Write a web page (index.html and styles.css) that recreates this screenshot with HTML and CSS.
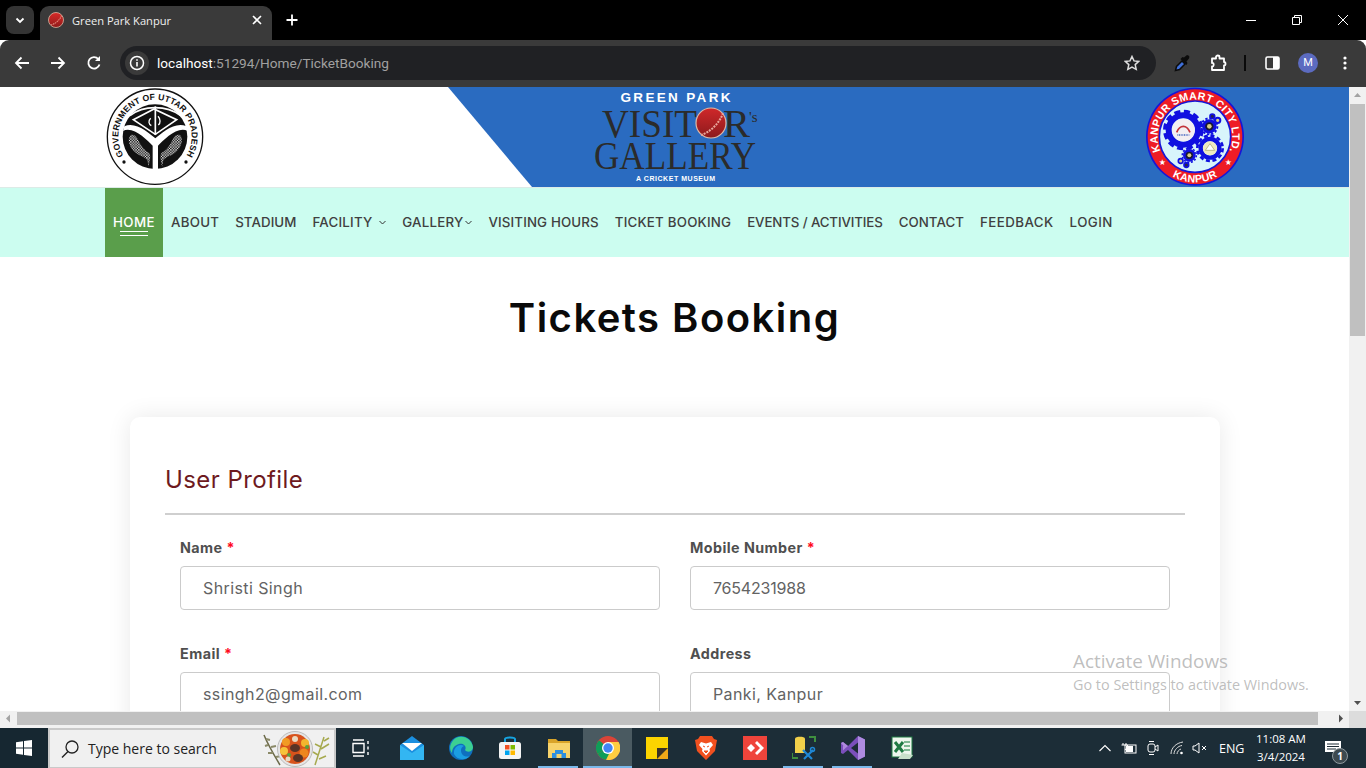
FILE: index.html
```html
<!DOCTYPE html>
<html lang="en">
<head>
<meta charset="utf-8">
<title>Green Park Kanpur</title>
<link rel="stylesheet" href="styles.css">
</head>
<body>
<div class="screen">
  <div class="tabstrip">
    <div class="tabdrop"><svg width="12" height="12" viewBox="0 0 12 12"><path d="M2.5 4.5 6 8l3.5-3.5" fill="none" stroke="#fff" stroke-width="1.8"/></svg></div>
    <div class="tab">
      <svg class="favicon" width="16" height="16" viewBox="0 0 16 16"><defs><linearGradient id="ballGrad" x1="0" y1="0" x2="0" y2="1"><stop offset="0" stop-color="#d92a28"/><stop offset="1" stop-color="#8f1a1a"/></linearGradient></defs><circle cx="8" cy="8" r="7.500" fill="url(#ballGrad)" stroke="#d9b9a5" stroke-width=".8"/><path d="M3 13C7 12 12 8 13.500 3.500" fill="none" stroke="#e28a7c" stroke-width="1.100" stroke-dasharray="1.500 .7"/></svg>
      <span class="tabtitle">Green Park Kanpur</span>
      <svg class="tabclose" width="10" height="10" viewBox="0 0 10 10"><path d="M1 1l8 8M9 1 1 9" stroke="#fff" stroke-width="1.6"/></svg>
    </div>
    <svg class="newtab" width="12" height="12" viewBox="0 0 12 12"><path d="M6 .5v11M.5 6h11" stroke="#fff" stroke-width="1.8"/></svg>
    <div class="winbtns">
      <svg width="46" height="40" viewBox="0 0 46 40"><path d="M18 20.5h10" stroke="#fff"/></svg>
      <svg width="46" height="40" viewBox="0 0 46 40"><path d="M18.5 17.5h7v7h-7zM20.5 17.5v-2h7v7h-2" fill="none" stroke="#fff"/></svg>
      <svg width="46" height="40" viewBox="0 0 46 40"><path d="M18 15l10 10M28 15 18 25" stroke="#fff"/></svg>
    </div>
  </div>
  <div class="toolbar">
    <svg class="navicon" width="16" height="16" viewBox="0 0 16 16"><path d="M15 8H2M7.500 2.500 2 8l5.500 5.500" fill="none" stroke="#fff" stroke-width="1.800"/></svg>
    <svg class="navicon" width="16" height="16" viewBox="0 0 16 16"><path d="M1 8h13M8.500 2.500 14 8l-5.500 5.500" fill="none" stroke="#fff" stroke-width="1.800"/></svg>
    <svg class="navicon" width="16" height="16" viewBox="0 0 16 16"><path d="M13.500 9.500A5.700 5.700 0 1 1 12.300 4" fill="none" stroke="#fff" stroke-width="1.800"/><path d="M14 1v5H9z" fill="#fff"/></svg>
    <div class="omnibox">
      <div class="siteinfo"><svg width="16" height="16" viewBox="0 0 16 16"><circle cx="8" cy="8" r="6.500" fill="none" stroke="#fff" stroke-width="1.500"/><path d="M8 7v4.500M8 4.300v1.500" stroke="#fff" stroke-width="1.600"/></svg></div>
      <span class="url"><span class="urlhost">localhost</span>:51294/Home/TicketBooking</span>
      <svg class="star" width="16" height="16" viewBox="0 0 16 16"><path d="M8 1.500l2 4.400 4.800.5-3.600 3.200 1 4.700L8 12l-4.200 2.300 1-4.700L1.200 6.400 6 5.900z" fill="none" stroke="#ddd" stroke-width="1.500"/></svg>
    </div>
    <div class="tools">
      <svg class="eyedrop" width="16" height="17" viewBox="0 0 16 17"><path d="M1.500 15.500l1-4 5.500-5.500 3 3-5.500 5.500z" fill="#3f6fd8" stroke="#0c0c0c" stroke-width="1.500"/><path d="M6.500 4l6 6 1-2-1-1.500 2.500-3C16 1 15 .5 13 0l-3 2.500L8.500 2z" fill="#0c0c0c"/></svg>
      <svg class="ext" width="18" height="18" viewBox="0 0 18 18"><path d="M2 4.500h4V3c0-2 3.500-2 3.500 0v1.500H14V8c2 0 2 3.500 0 3.500v4.500H2v-3.500c2 .5 2.500-4 0-3.500z" fill="none" stroke="#fff" stroke-width="1.800" stroke-linejoin="round"/></svg>
      <span class="toolsep"></span>
      <svg class="side" width="15" height="14" viewBox="0 0 15 14"><rect x="1" y="1" width="13" height="12" rx="1.500" fill="none" stroke="#fff" stroke-width="1.600"/><rect x="8" y="1" width="6" height="12" fill="#fff"/></svg>
      <span class="avatar">M</span>
      <svg class="dots" width="4" height="14" viewBox="0 0 4 14"><circle cx="2" cy="2" r="1.600" fill="#fff"/><circle cx="2" cy="7" r="1.600" fill="#fff"/><circle cx="2" cy="12" r="1.600" fill="#fff"/></svg>
    </div>
  </div>

  <div class="viewport">
    <div class="page-and-vbar">
      <div class="page">
        <header class="site-header">
          <div class="header-blue"></div>
          <div class="header-row">
            <svg class="emblem" width="100" height="100" viewBox="45 6 300 300">
              <defs><pattern id="fishDots" width="8" height="8" patternUnits="userSpaceOnUse"><rect width="8" height="8" fill="#111"/><circle cx="2.500" cy="2.500" r="2.300" fill="#fff"/><circle cx="6.500" cy="6.500" r="1.800" fill="#fff"/></pattern></defs>
              <circle cx="195" cy="155" r="143" fill="#fff" stroke="#111" stroke-width="4"/>
              <circle cx="195" cy="155" r="97" fill="#111"/>
              <path id="upArc" d="M100 210A110 110 0 1 1 290 210" fill="none"/>
              <text class="emblem-text"><textPath href="#upArc" startOffset="50%" text-anchor="middle">GOVERNMENT OF UTTAR PRADESH</textPath></text>
              <circle cx="102" cy="231" r="5" fill="#111"/><circle cx="288" cy="231" r="5" fill="#111"/>
              <path d="M99 138C130 122 170 165 188 182V252H204V182C222 165 262 122 293 138L289 124C255 108 215 145 196 160 177 145 137 108 103 124z" fill="#fff"/>
              <path d="M130 104 192 72 260 104 196 148z" fill="#111" stroke="#fff" stroke-width="5"/>
              <path d="M120 92C160 60 230 60 272 92" fill="none" stroke="#fff" stroke-width="5"/>
              <path d="M196 64V150" stroke="#fff" stroke-width="5"/>
              <path d="M182 100C174 108 176 118 184 122M204 94C212 102 212 114 205 120" fill="none" stroke="#fff" stroke-width="4"/>
              <path d="M122 150C110 162 118 190 138 204 150 214 160 212 172 226L176 246C178 226 184 218 178 204 160 196 150 176 142 160 136 150 130 148 122 150z" fill="url(#fishDots)"/>
              <path d="M270 150C282 162 274 190 254 204 242 214 232 212 220 226L216 246C214 226 208 218 214 204 232 196 242 176 250 160 256 150 262 148 270 150z" fill="url(#fishDots)"/>
            </svg>
            <svg class="gallery-logo" width="165" height="100" viewBox="0 0 165 100">
              <defs><linearGradient id="bigBall" x1="0" y1="0" x2="0" y2="1"><stop offset="0" stop-color="#d0282a"/><stop offset="1" stop-color="#8c1a1c"/></linearGradient></defs>
              <text class="lg-green" x="82.500" y="15" text-anchor="middle" textLength="110">GREEN PARK</text>
              <text class="lg-serif" x="9" y="50" textLength="95" lengthAdjust="spacingAndGlyphs">VISIT</text>
              <text class="lg-serif" x="130" y="50" textLength="27" lengthAdjust="spacingAndGlyphs">R</text>
              <text class="lg-s" x="156" y="35">'s</text>
              <circle cx="118" cy="36" r="15" fill="url(#bigBall)" stroke="#e0b9a4" stroke-width="1.200"/>
              <path d="M108 48C116 46 127 36 130 26" fill="none" stroke="#e8a69b" stroke-width="2" stroke-dasharray="2 1"/>
              <text class="lg-serif" x="1" y="82" textLength="162" lengthAdjust="spacingAndGlyphs">GALLERY</text>
              <text class="lg-small" x="82.500" y="94" text-anchor="middle" textLength="79">A CRICKET MUSEUM</text>
            </svg>
            <svg class="smart-logo" width="100" height="100" viewBox="45 6 300 300">
              <circle cx="195" cy="155" r="147" fill="#1616d8"/>
              <circle cx="195" cy="155" r="142" fill="#ee1c25"/>
              <circle cx="195" cy="155" r="107" fill="#d8f4fb" stroke="#1616d8" stroke-width="5"/>
              <path id="ksTop" d="M123 241A112 112 0 1 1 267 241" fill="none"/>
              <text class="ks-text"><textPath href="#ksTop" startOffset="50%" text-anchor="middle">KANPUR SMART CITY LTD.</textPath></text>
              <path id="ksBot" d="M117 268A138 138 0 0 0 273 268" fill="none"/>
              <text class="ks-text"><textPath href="#ksBot" startOffset="50%" text-anchor="middle">KANPUR</textPath></text>
              <text class="ks-star" x="97" y="240" text-anchor="middle">★</text><text class="ks-star" x="295" y="240" text-anchor="middle">★</text>
              <circle cx="160" cy="135" r="44" fill="none" stroke="#1010e0" stroke-width="18"/>
              <circle cx="160" cy="135" r="55" fill="none" stroke="#1010e0" stroke-width="12" stroke-dasharray="18 10.800"/>
              <circle cx="160" cy="135" r="34" fill="#f2eef2"/><path d="M140 142C150 118 170 118 180 142" fill="none" stroke="#c2323a" stroke-width="5"/><path d="M142 150h36" stroke="#4466c0" stroke-width="5" stroke-dasharray="3 2"/>
              <circle cx="240" cy="190" r="28" fill="none" stroke="#1010e0" stroke-width="13"/>
              <circle cx="240" cy="190" r="38" fill="none" stroke="#1010e0" stroke-width="8" stroke-dasharray="12 7.900"/>
              <circle cx="240" cy="190" r="21" fill="#efe9c0"/><path d="M226 196 240 176 254 196z" fill="#fff" stroke="#a5a060" stroke-width="2"/>
              <circle cx="238" cy="124" r="17" fill="#1a1a30" stroke="#1010e0" stroke-width="9"/><circle cx="238" cy="124" r="24" fill="none" stroke="#1010e0" stroke-width="6" stroke-dasharray="7 5.500"/><circle cx="238" cy="124" r="7" fill="#d9cf85"/>
              <circle cx="263" cy="106" r="8" fill="#d9cf85" stroke="#1010e0" stroke-width="6"/><circle cx="247" cy="94" r="7" fill="#28284a" stroke="#1010e0" stroke-width="5"/>
              <circle cx="178" cy="211" r="15" fill="#1a1a30" stroke="#1010e0" stroke-width="8"/><circle cx="178" cy="211" r="21" fill="none" stroke="#1010e0" stroke-width="5" stroke-dasharray="6 5"/><circle cx="178" cy="211" r="6" fill="#d9cf85"/>
              <circle cx="152" cy="228" r="7" fill="#d9cf85" stroke="#1010e0" stroke-width="5"/><circle cx="169" cy="240" r="7" fill="#28284a" stroke="#1010e0" stroke-width="5"/>
            </svg>
          </div>
        </header>
        <nav class="site-nav">
          <a class="nav-item active nav-wide"><span class="home-label">HOME</span></a>
          <a class="nav-item nav-about">ABOUT</a>
          <a class="nav-item nav-stadium">STADIUM</a>
          <a class="nav-item">FACILITY <svg class="chev" width="7" height="5" viewBox="0 0 7 5"><path d="M.5 1l3 3 3-3" fill="none" stroke="#333" stroke-width="1"/></svg></a>
          <a class="nav-item">GALLERY<svg class="chev chev-tight" width="7" height="5" viewBox="0 0 7 5"><path d="M.5 1l3 3 3-3" fill="none" stroke="#333" stroke-width="1"/></svg></a>
          <a class="nav-item nav-visiting">VISITING HOURS</a>
          <a class="nav-item">TICKET BOOKING</a>
          <a class="nav-item nav-narrow">EVENTS / ACTIVITIES</a>
          <a class="nav-item nav-contact">CONTACT</a>
          <a class="nav-item nav-wide">FEEDBACK</a>
          <a class="nav-item nav-wide">LOGIN</a>
        </nav>
        <main class="content">
          <h1 class="page-title">Tickets Booking</h1>
          <section class="card">
            <h2 class="card-title">User Profile</h2>
            <form class="form-grid">
              <div class="field"><label class="field-label">Name <span class="req">*</span></label><div class="input">Shristi Singh</div></div>
              <div class="field"><label class="field-label">Mobile Number <span class="req">*</span></label><div class="input input-num">7654231988</div></div>
              <div class="field"><label class="field-label">Email <span class="req">*</span></label><div class="input">ssingh2@gmail.com</div></div>
              <div class="field"><label class="field-label">Address</label><div class="input">Panki, Kanpur</div></div>
            </form>
          </section>
        </main>
      </div>
      <div class="vbar">
        <svg class="vbtn" width="17" height="17" viewBox="0 0 17 17"><path d="M5 10l3.500-4 3.500 4z" fill="#a3a3a3"/></svg>
        <div class="vthumb"></div>
        <svg class="vbtn vbtn-end" width="17" height="17" viewBox="0 0 17 17"><path d="M5 7l3.500 4 3.500-4z" fill="#505050"/></svg>
      </div>
    </div>
    <div class="hbar">
      <svg class="hbtn" width="17" height="13" viewBox="0 0 17 13"><path d="M10 2.500 6 6.500l4 4z" fill="#a3a3a3"/></svg>
      <div class="hthumb"></div>
      <svg class="hbtn" width="17" height="13" viewBox="0 0 17 13"><path d="M7 2.500l4 4-4 4z" fill="#505050"/></svg>
      <div class="hcorner"></div>
    </div>
  </div>

  <footer class="taskbar">
    <div class="start"><svg width="18" height="18" viewBox="0 0 18 18"><path d="M1 3.200 8 2.200V8.500H1zM9 2 17 1V8.500H9zM1 9.500H8V15.800L1 14.800zM9 9.500H17V17L9 16z" fill="#fff"/></svg></div>
    <div class="searchbox">
      <svg width="20" height="20" viewBox="0 0 20 20"><circle cx="12" cy="8" r="6" fill="none" stroke="#222" stroke-width="1.300"/><path d="M8 12.500 2 18.500" stroke="#222" stroke-width="1.500"/></svg>
      <span class="searchtext">Type here to search</span>
      <svg class="stew" width="72" height="36" viewBox="0 0 72 36">
        <path d="M2 4C6 14 12 24 18 34" fill="none" stroke="#6c6a4a" stroke-width="1.500"/><path d="M4 8l4 1M6 14l-3 1M9 16l5-1M11 22l-5 0M14 26l5-1" stroke="#8b8a68" stroke-width="2"/>
        <circle cx="33" cy="18" r="17.500" fill="#e5e5e5" stroke="#bbb"/><circle cx="33" cy="18" r="15" fill="#d8531c"/>
        <circle cx="24" cy="11" r="4" fill="#f19b24"/><circle cx="33" cy="8" r="3" fill="#ead9c0"/><circle cx="43" cy="12" r="4" fill="#f4b52e"/><circle cx="22" cy="20" r="4" fill="#f6c33a"/><ellipse cx="33" cy="17" rx="5" ry="4" fill="#5a3426"/><circle cx="42" cy="22" r="4.500" fill="#ee861e"/><ellipse cx="36" cy="27" rx="5" ry="4" fill="#5a3426"/><circle cx="27" cy="24" r="2" fill="#5aa03c"/><circle cx="26" cy="28" r="2.500" fill="#ead9c0"/><circle cx="45" cy="16" r="2" fill="#5aa03c"/>
        <path d="M53 34 62 6M56 24l-5-3M59 16l-6-3M59 18l8-5M62 10l5-3M57 28l7-3" fill="none" stroke="#a6a94e" stroke-width="1.500"/>
      </svg>
    </div>
    <div class="tb-icon"><svg width="22" height="20" viewBox="0 0 22 20"><path d="M3 2h11M3 18h11M3 5.500h11v9H3z M18 3v3M18 8.500v3M18 14v3" fill="none" stroke="#fff" stroke-width="1.400"/></svg></div>
    <div class="tb-icon tb-gap"><svg width="24" height="24" viewBox="0 0 24 24"><path d="M0 9 12 0 24 9V24H0z" fill="#1b8fdf"/><path d="M0 9l12 8L24 9V24H0z" fill="#33b6f2"/><path d="M2 7h20L12 15z" fill="#fff"/></svg></div>
    <div class="tb-icon"><svg width="24" height="24" viewBox="0 0 24 24"><circle cx="12" cy="12" r="12" fill="#0f6fbe"/><path d="M3 6C7-2 22-1 24 11c0 5-6 6-8 3 2-3-1-7-6-6C6 9 3 12 3 17 0 13 1 9 3 6z" fill="#3ccf92"/><path d="M5 18C4 11 11 7 15 10c-3 1-4 5-2 8 2 3 6 3 8 2-5 5-13 4-16-2z" fill="#1b9de2"/></svg></div>
    <div class="tb-icon"><svg width="24" height="24" viewBox="0 0 24 24"><path d="M7 6V3c0-2 10-2 10 0v3" fill="none" stroke="#16a3e0" stroke-width="2"/><rect x="1" y="6" width="22" height="17" rx="2.500" fill="#f4f4f4"/><rect x="7" y="9" width="4.500" height="4.500" fill="#f25022"/><rect x="12.500" y="9" width="4.500" height="4.500" fill="#7fba00"/><rect x="7" y="14.500" width="4.500" height="4.500" fill="#00a4ef"/><rect x="12.500" y="14.500" width="4.500" height="4.500" fill="#ffb900"/></svg></div>
    <div class="tb-icon running"><svg width="22" height="20" viewBox="0 0 22 20"><path d="M0 1h8l2 2h12v17H0z" fill="#d9a429"/><rect y="5" width="22" height="15" fill="#f7d36b"/><path d="M7 12h8v3h3v5H4v-5h3z" fill="#2d8fe0"/><rect x="8.500" y="16" width="5" height="4" fill="#f7d36b"/></svg></div>
    <div class="tb-icon running current"><svg width="24" height="24" viewBox="0 0 24 24"><circle cx="12" cy="12" r="12" fill="#db4437"/><path d="M12 12 1.600 18A12 12 0 0 1 3 4.200z" fill="#0f9d58"/><path d="M12 6h10.600A12 12 0 0 1 10 23.800L12 12z" fill="#ffcd40"/><path d="M12 12 1.600 18A12 12 0 0 0 10 23.800L15 14z" fill="#0f9d58"/><circle cx="12" cy="12" r="6" fill="#fff"/><circle cx="12" cy="12" r="4.700" fill="#4285f4"/></svg></div>
    <div class="tb-icon"><svg width="22" height="22" viewBox="0 0 22 22"><path d="M0 0H22V22H0z" fill="#fcd400"/><path d="M11 22 22 11V22z" fill="#f0a818"/><path d="M11 22V11H22z" fill="#3a3226"/></svg></div>
    <div class="tb-icon"><svg width="22" height="24" viewBox="0 0 22 24"><path d="M5 0H17L19 3 22 4 20 15 11 24 2 15 0 4 3 3z" fill="#f1501f"/><path d="M6 6 11 7.500 16 6 18 9 14.500 13 15 15 11 19.500 7 15 7.500 13 4 9z" fill="#fff"/><path d="M8 10l2 1M14 10l-2 1M9 15h4l-2 2z" stroke="#f1501f" fill="#f1501f"/></svg></div>
    <div class="tb-icon"><svg width="24" height="24" viewBox="0 0 24 24"><rect width="24" height="24" fill="#ef443b"/><path d="M8 8 12 12 8 16 4 12z" fill="#fff"/><path d="M12 7l2-2 7 7-7 7-2-2 5-5z" fill="#fff"/></svg></div>
    <div class="tb-icon running"><svg width="24" height="24" viewBox="0 0 24 24"><path d="M3 2.500C3 0 13 0 13 2.500V17H3z" fill="#f2d04a"/><path d="M17 1h6v5M0 17v5h6" fill="none" stroke="#3f8f3f" stroke-width="2"/><path d="M11 14 20 23M21 14 12 23" stroke="#1f88d6" stroke-width="2.200"/><circle cx="20.500" cy="13.500" r="2" fill="none" stroke="#1f88d6" stroke-width="1.500"/></svg></div>
    <div class="tb-icon running"><svg width="24" height="24" viewBox="0 0 24 24"><path d="M17 0 24 3.500V20.500L17 24 7 14 2 18 0 17V7L2 6 7 10z" fill="#7b4fbb"/><path d="M0 7l2-1 5 4-2.500 2zM2 9.500 4.500 12 2 14.500z" fill="#b08ade"/><path d="M17 0 24 3.500V20.500L17 24z" fill="#ae8be0"/><path d="M17 6.500V17.500L10 12z" fill="#1d2c36"/></svg></div>
    <div class="tb-icon"><svg width="24" height="24" viewBox="0 0 24 24"><rect x="2" y="1" width="20" height="20" fill="#eef6ee" stroke="#1f7a43"/><path d="M5 6l8 10M13 6 5 16" stroke="#1f7a43" stroke-width="3"/><path d="M14 6h6M14 10h6M14 14h6" stroke="#7eb893" stroke-width="2"/><path d="M12 17l11 2-3 4H8z" fill="#c8dfca"/></svg></div>
    <div class="tray">
      <svg class="tray-ic tray-up" width="12" height="8" viewBox="0 0 12 8"><path d="M.5 7 6 1.500 11.500 7" fill="none" stroke="#fff" stroke-width="1.100"/></svg>
      <svg class="tray-ic" width="16" height="12" viewBox="0 0 16 12"><rect x="4" y="3" width="11" height="8" fill="none" stroke="#fff"/><rect x="5" y="4" width="7" height="6" fill="#fff"/><path d="M2 1v2M5 1v2M0.500 3h6v2L4 8" stroke="#fff" fill="none"/></svg>
      <svg class="tray-ic" width="12" height="16" viewBox="0 0 12 16"><rect x="1" y="4" width="7" height="8" rx="2" fill="none" stroke="#fff"/><path d="M8 7l3-2v6L8 9M2 1.500h5M2 14.500h5" fill="none" stroke="#fff"/></svg>
      <svg class="tray-ic tray-wifi" width="14" height="14" viewBox="0 0 14 14"><path d="M1 13C1 7 6 2 13 1M4 13C4 9 8 5 12 4.500M7 13C7 11 9 8.500 11 8" fill="none" stroke="#ddd"/><circle cx="11.500" cy="12" r="1.300" fill="#fff"/></svg>
      <svg class="tray-ic tray-vol" width="15" height="12" viewBox="0 0 15 12"><path d="M1 4h2L7 1V11L3 8H1zM10 4l4 4M14 4l-4 4" fill="none" stroke="#fff"/></svg>
      <span class="tray-lang">ENG</span>
      <div class="clock"><span>11:08 AM</span><span>3/4/2024</span></div>
      <div class="notif">
        <svg width="16" height="14" viewBox="0 0 16 14"><path d="M0 0H16V11H0z" fill="#fff"/><path d="M2 3H14M2 5.500H14M2 8H11" stroke="#1d2c36"/></svg>
        <span class="notif-count">1</span>
      </div>
    </div>
  </footer>

  <div class="activate">
    <div class="activate-title">Activate Windows</div>
    <div class="activate-sub">Go to Settings to activate Windows.</div>
  </div>
</div>
</body>
</html>
```

FILE: styles.css
```css
* { box-sizing: border-box; }
html, body { margin: 0; padding: 0; height: 100%; overflow: hidden; }
body { font-family: Inter, "Liberation Sans", sans-serif; background: #fff; }
.screen { position: relative; width: 1366px; height: 768px; display: flex; flex-direction: column; overflow: hidden; }

/* browser chrome */
.tabstrip { height: 40px; background: #000; display: flex; align-items: flex-end; padding-left: 6px; }
.tabdrop { width: 28px; height: 28px; margin-bottom: 6px; border-radius: 8px; background: #343434; display: flex; align-items: center; justify-content: center; }
.tab { width: 232px; height: 34px; margin-left: 6px; background: #3a3a3a; border-radius: 9px 9px 0 0; display: flex; align-items: center; padding: 0 10px 6px 8px; position: relative; }
.favicon { flex: none; }
.tabtitle { margin-left: 8px; flex: 1; font: 11.150px "Open Sans", sans-serif; color: #f0f0f0; }
.newtab { margin: 0 0 14px 14px; }
.winbtns { margin-left: auto; display: flex; gap: 0; align-self: flex-start; }
.winbtns svg { width: 46px; height: 40px; display: block; }
.toolbar { height: 47px; background: #3a3a3a; border-radius: 9px 9px 0 0; display: flex; align-items: center; padding: 0 6px 1px 14px; gap: 20px; }
.navicon { flex: none; }
.omnibox { margin-left: -2px; height: 34px; flex: none; width: 1036px; background: #202124; border-radius: 17px; display: flex; align-items: center; padding: 0 16px 0 5px; }
.siteinfo { width: 24px; height: 24px; border-radius: 50%; background: #3a3a3a; display: flex; align-items: center; justify-content: center; flex: none; }
.url { margin-left: 8px; font: 13.650px Roboto, sans-serif; color: #a0a0a0; flex: 1; }
.urlhost { color: #fff; }
.star { flex: none; }
.tools { display: flex; align-items: center; margin-left: -2px; width: 190px; }
.eyedrop { margin-left: 0; }
.ext { margin-left: 20px; }
.toolsep { width: 2px; height: 16px; background: #0a0a0a; margin-left: 16px; }
.side { margin-left: 19px; }
.avatar { width: 20px; height: 20px; border-radius: 50%; background: #5c6bc0; color: #fff; font: 11px/20px Roboto, sans-serif; text-align: center; margin-left: 18px; }
.dots { margin-left: 25px; }

/* viewport and scrollbars */
.viewport { flex: none; height: 641px; display: flex; flex-direction: column; overflow: hidden; }
.page-and-vbar { flex: none; height: 624px; display: flex; }
.page { flex: none; width: 1349px; height: 100%; overflow: hidden; background: #fff; }
.vbar { flex: none; width: 17px; background: #f1f1f1; display: flex; flex-direction: column; }
.vbtn { flex: none; }
.vthumb { width: 15px; height: 232px; margin: 0 1px; background: #c0c0c0; }
.vbtn-end { margin-top: auto; }
.hbar { flex: none; height: 17px; display: flex; align-items: center; background: #f1f1f1; padding-bottom: 2px; }
.hbtn { flex: none; }
.hthumb { flex: none; width: 1301px; height: 13px; background: #c0c0c0; }
.hbar .hbtn:nth-of-type(2) { margin-left: 14px; }
.hcorner { flex: none; width: 17px; height: 17px; margin-left: auto; margin-bottom: -2px; background: #dcdcdc; }

/* site header */
.site-header { display: grid; height: 100px; background: #fff; }
.header-blue { grid-area: 1 / 1; background: #2a6bc0; clip-path: polygon(448px 0, 100% 0, 100% 100%, 532px 100%); }
.header-row { grid-area: 1 / 1; position: relative; display: flex; justify-content: space-between; padding: 0 104px 0 105px; }
.emblem, .smart-logo, .gallery-logo { display: block; flex: none; }
.emblem-text { font: 700 26px "Liberation Sans", sans-serif; fill: #111; letter-spacing: .3px; }
.ks-text { font: 700 32px "Liberation Sans", sans-serif; fill: #fff; letter-spacing: 1px; }
.ks-star { font: 24px "DejaVu Sans", sans-serif; fill: #fff; }
.lg-green { font: 700 13.500px "Liberation Sans", sans-serif; fill: #fff; }
.lg-serif { font: 41px "Liberation Serif", serif; fill: #2b2b2b; }
.lg-s { font: 15px "Liberation Serif", serif; fill: #2b2b2b; }
.lg-small { font: 700 7px "Liberation Sans", sans-serif; fill: #fff; }

/* site nav */
.site-nav { margin-top: 1px; height: 69px; background: #ccfdf0; display: flex; align-items: stretch; padding-left: 105px; box-shadow: 0 -1px 0 #dcebe7; }
.nav-item { display: flex; align-items: center; white-space: pre; padding: 0 8px; font-size: 13.300px; font-weight: 500; letter-spacing: .22px; color: #404040; padding-bottom: 1px; }
.nav-wide { letter-spacing: .45px; }
.nav-about { letter-spacing: .25px; }
.nav-stadium { letter-spacing: .08px; }
.nav-visiting { letter-spacing: .15px; }
.nav-narrow { letter-spacing: -.12px; }
.nav-contact { letter-spacing: .05px; }
.nav-item.active { background: #5a9e4b; color: #fff; }
.home-label { position: relative; }
.home-label::after { content: ""; position: absolute; left: 7px; right: 7px; bottom: -6px; height: 3px; border-top: 1px solid #fff; border-bottom: 1px solid #fff; }
.chev { margin-left: 3px; }
.chev-tight { margin-left: 2px; }

/* content */
.content { display: block; }
.page-title { margin: 31px 0 69px; height: 60px; line-height: 60px; text-align: center; font-size: 40px; font-weight: 600; letter-spacing: 1.470px; color: #0a0a0a; }
.card { width: 1090px; margin-left: 130px; padding: 44px 35px 30px; background: #fff; border-radius: 10px; box-shadow: 0 0 24px rgba(0,0,0,.09); }
.card-title { margin: 0; height: 54px; padding-bottom: 1px; font-size: 24px; line-height: 37px; font-weight: 400; letter-spacing: .42px; color: #6e1a1e; border-bottom: 2px solid #cfcfcf; }
.form-grid { display: grid; grid-template-columns: 480px 480px; column-gap: 30px; row-gap: 34px; padding: 23px 15px 0; }
.field { display: flex; flex-direction: column; }
.field-label { height: 18px; line-height: 18px; font-size: 14.300px; font-weight: 700; letter-spacing: .45px; color: #4f4f4f; margin-bottom: 9px; margin-top: 1px; }
.req { color: #ff0a1e; }
.input { height: 44px; line-height: 42px; border: 1px solid #cbcbcb; border-radius: 4px; padding-left: 22px; font-size: 16px; letter-spacing: .4px; color: #636363; background: #fff; }
.input-num { letter-spacing: -.2px; }

/* taskbar */
.taskbar { flex: none; height: 40px; background: #1c2d37; display: flex; align-items: stretch; }
.start { width: 48px; background: #162731; display: flex; align-items: center; justify-content: center; }
.searchbox { width: 288px; background: #f0f0f0; border: 2px solid #c9c9c9; border-bottom-width: 1px; display: flex; align-items: center; padding-left: 10px; position: relative; }
.searchtext { margin-left: 8px; font: 14px "Open Sans", sans-serif; color: #222; }
.stew { margin-left: auto; margin-right: 0; }
.tb-icon { width: 49px; display: flex; align-items: center; justify-content: center; position: relative; }
.tb-gap { margin-left: 2px; }
.tb-icon.current { background: #4a5a61; }
.tb-icon.running::after { content: ""; position: absolute; left: 4px; right: 5px; bottom: 0; height: 2px; background: #7ab8ea; }
.tb-icon.current::after { left: 0; right: 0; }
.tray { margin-left: auto; display: flex; align-items: center; color: #fff; }
.tray-ic { flex: none; margin-left: 10px; }
.tray-up { margin-left: 0; }
.tray-wifi { margin-left: 11px; }
.tray-vol { margin-left: 8.500px; }
.tray-lang { margin-left: 12px; font: 12.500px "Open Sans", sans-serif; width: 30px; }
.clock { width: 64px; display: flex; flex-direction: column; align-items: center; font: 11.500px/18px "Open Sans", sans-serif; }
.notif { position: relative; width: 53px; align-self: stretch; display: flex; justify-content: center; align-items: center; padding-right: 13px; }
.notif-count { position: absolute; left: 19px; top: 20px; width: 16px; height: 16px; border-radius: 50%; background: #3d4a50; border: 1px solid #8f9a9f; font: 700 10px/14px "Open Sans", sans-serif; text-align: center; }

/* overlay */
.activate { position: absolute; left: 1073px; top: 649px; color: rgba(150,150,150,.62); font-family: "Open Sans", sans-serif; pointer-events: none; }
.activate-title { font-size: 18.900px; line-height: 25px; }
.activate-sub { font-size: 14.400px; line-height: 21px; }
```
